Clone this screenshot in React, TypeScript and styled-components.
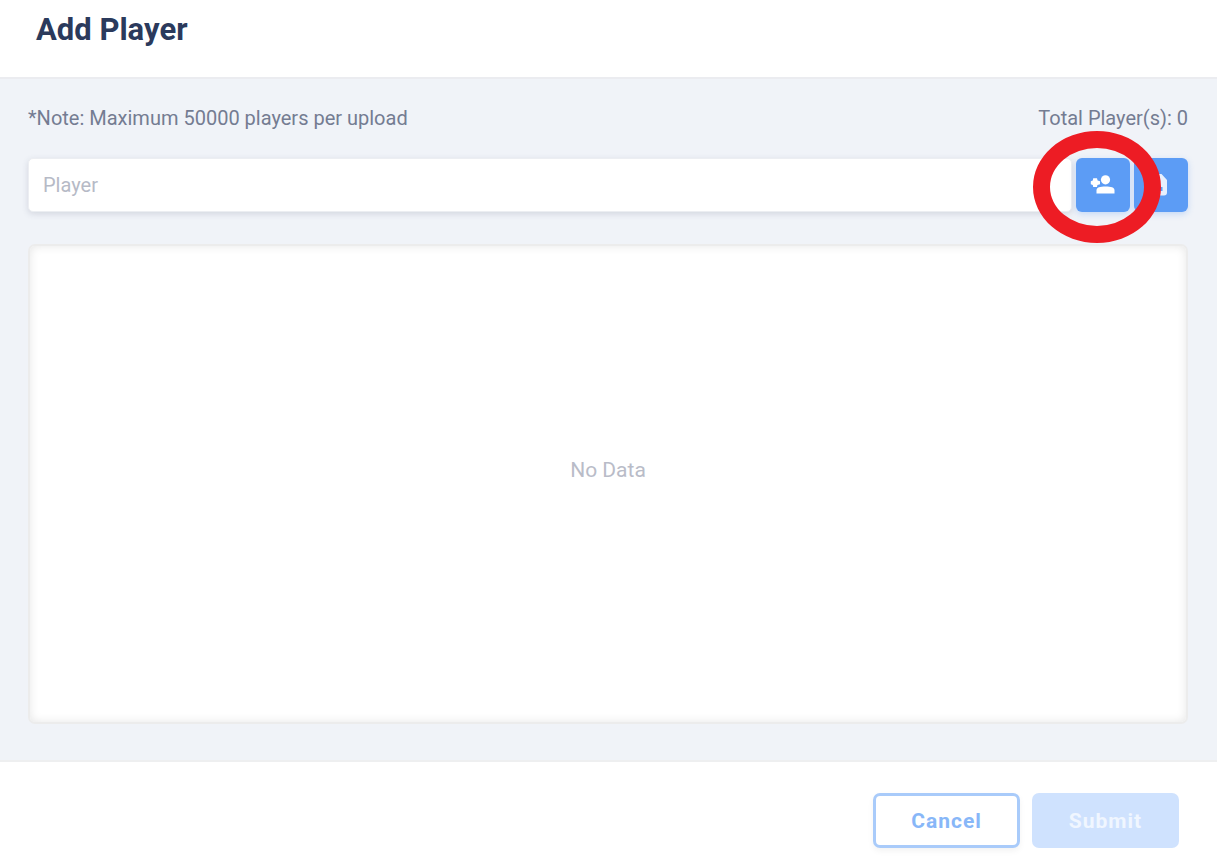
import React, { useState } from 'react';
import styled, { createGlobalStyle } from 'styled-components';

const GlobalStyle = createGlobalStyle`
  *, *::before, *::after { box-sizing: border-box; }
  body { margin: 0; background: #fff; font-family: Roboto, sans-serif; }
`;

const Dialog = styled.main`
  display: flex;
  flex-direction: column;
  min-height: 100vh;
  margin-right: 5px;
  background: #fff;
`;

const Header = styled.header`
  padding: 12px 36px 29px;
  border-bottom: 2px solid #ebecf0;
`;

const Title = styled.h1`
  margin: 0;
  font-size: 31px;
  line-height: 36px;
  font-weight: 700;
  color: #2b3a5c;
`;

const Body = styled.section`
  flex: 1;
  display: flex;
  flex-direction: column;
  padding: 27px 29px 36px 28px;
  background: #f0f3f8;
  border-bottom: 2px solid #eeeff0;
`;

const Notes = styled.div`
  display: flex;
  justify-content: space-between;
  font-size: 20px;
  line-height: 24px;
  color: #747c92;
`;

const Note = styled.p`
  margin: 0;
`;

const EntryRow = styled.div`
  display: flex;
  gap: 4px;
  height: 54px;
  margin-top: 28px;
`;

const PlayerInput = styled.input`
  flex: 1;
  min-width: 0;
  padding: 0 14px;
  border: 1px solid #eceef2;
  border-radius: 5px;
  background: #fff;
  box-shadow: 0 2px 6px rgba(60, 70, 100, 0.16);
  font: 400 20px/24px Roboto, sans-serif;
  color: #747c92;
  outline: none;
  &::placeholder { color: #b6bac6; opacity: 1; }
`;

const IconButton = styled.button`
  display: flex;
  align-items: center;
  justify-content: center;
  width: 54px;
  padding: 0;
  border: 0;
  border-radius: 6px;
  background: #5c9cf5;
  color: #fff;
  box-shadow: 0 2px 6px rgba(92, 156, 245, 0.3);
`;

const Highlighted = styled.div`
  position: relative;
  display: flex;
`;

const Ring = styled.span`
  position: absolute;
  top: -27px;
  left: -43px;
  width: 128px;
  height: 112px;
  border: 17px solid #ed1c24;
  border-radius: 50%;
  pointer-events: none;
  z-index: 1;
`;

const PlayerList = styled.div`
  flex: 1;
  display: flex;
  align-items: center;
  justify-content: center;
  margin-top: 32px;
  padding-bottom: 28px;
  border: 2px solid #ececec;
  border-radius: 7px;
  background: #fff;
  box-shadow: inset 0 0 10px rgba(0, 0, 0, 0.1);
  font-size: 21px;
  line-height: 24px;
  color: #b9bcc8;
`;

const Footer = styled.footer`
  display: flex;
  justify-content: flex-end;
  gap: 12px;
  padding: 31px 38px 20px;
`;

const ActionButton = styled.button<{ $filled?: boolean }>`
  width: 147px;
  height: 55px;
  padding: 0;
  border: ${p => (p.$filled ? '0' : '3px solid #a9cbfa')};
  border-radius: 7px;
  background: ${p => (p.$filled ? '#cfe2fe' : '#fff')};
  color: ${p => (p.$filled ? '#f0f6ff' : '#88b7f8')};
  box-shadow: ${p => (p.$filled ? 'none' : '0 3px 6px rgba(0, 0, 0, 0.05)')};
  font: 700 21px/24px Roboto, sans-serif;
  letter-spacing: 1px;
`;

const AddPeopleIcon = () => (
  <svg width="26" height="20" viewBox="0 0 26 20" fill="currentColor" aria-hidden="true">
    <circle cx="15.5" cy="4.8" r="4.6" />
    <path d="M6.500 15.500C6.500 12.500 10 11.600 15.500 11.600S24.500 12.500 24.500 15.500v3H6.500z" />
    <path d="M3.200 3.300h3.800l.6 2.200 2.400.7v3l-2.600.8-.4 2H3.200l-.4-2L.8 9.200v-3l2-.7z" />
  </svg>
);

const FileIcon = () => (
  <svg width="20" height="24" viewBox="0 0 20 24" fill="currentColor" aria-hidden="true">
    <path
      fillRule="evenodd"
      opacity="0.85"
      d="M4 1h6.500L16 7v12.500a3 3 0 0 1-3 3H4a2 2 0 0 1-2-2V3a2 2 0 0 1 2-2zm1 13v4h6.500v-4z"
    />
  </svg>
);

export default function App() {
  const [player, setPlayer] = useState('');
  return (
    <>
      <GlobalStyle />
      <Dialog>
        <Header>
          <Title>Add Player</Title>
        </Header>
        <Body>
          <Notes>
            <Note>*Note: Maximum 50000 players per upload</Note>
            <Note>Total Player(s): 0</Note>
          </Notes>
          <EntryRow>
            <PlayerInput
              aria-label="Player"
              placeholder="Player"
              value={player}
              onChange={e => setPlayer(e.target.value)}
            />
            <Highlighted>
              <IconButton type="button" aria-label="Add player">
                <AddPeopleIcon />
              </IconButton>
              <Ring />
            </Highlighted>
            <IconButton type="button" aria-label="Upload file">
              <FileIcon />
            </IconButton>
          </EntryRow>
          <PlayerList>No Data</PlayerList>
        </Body>
        <Footer>
          <ActionButton type="button">Cancel</ActionButton>
          <ActionButton type="button" $filled disabled>Submit</ActionButton>
        </Footer>
      </Dialog>
    </>
  );
}
